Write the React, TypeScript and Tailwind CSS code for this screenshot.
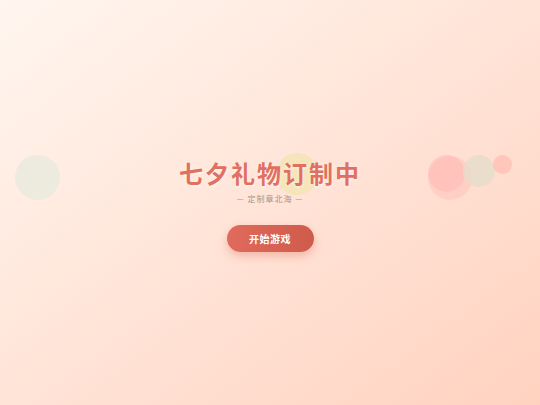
import React from "react";

// floating decorative bubbles
function Bubble({ className }: { className: string }) {
  return <div className={`absolute rounded-full ${className}`} />;
}

export default function App() {
  return (
    <div
      className="relative h-[405px] w-[540px] overflow-hidden bg-gradient-to-br from-[#fff6ef] to-[#ffd2c0]"
      style={{ fontFamily: '"Noto Sans CJK SC", "Noto Sans", sans-serif' }}
    >
      {/* ─── Bubbles ─── */}
      <Bubble className="left-[15px] top-[155px] h-[45px] w-[45px] bg-[#e9eadd]/80" />
      <Bubble className="left-[276px] top-[153px] h-[42px] w-[42px] bg-[#f5e3b8]/90" />
      <Bubble className="left-[428px] top-[156px] h-[44px] w-[44px] bg-[#ffb9b4]/40" />
      <Bubble className="left-[428px] top-[155px] h-[37px] w-[37px] bg-[#ffb5b2]/50" />
      <Bubble className="left-[463px] top-[155px] h-[32px] w-[32px] bg-[#e6dccb]/80" />
      <Bubble className="left-[493px] top-[155px] h-[19px] w-[19px] bg-[#ffbcb4]/70" />

      {/* ─── Title + CTA ─── */}
      <div className="relative flex h-full flex-col items-center pt-[157px]">
        <h1 className="text-[24px] font-bold leading-[32px] tracking-[2px] text-[#e0705f] [text-shadow:0_1px_3px_rgba(255,255,255,0.8)]">
          七夕礼物订制中
        </h1>
        <p className="mt-[4px] text-[8px] leading-[12px] tracking-[1px] text-[#a8958a]">
          — 定制章北海 —
        </p>
        <button className="mt-[20px] flex h-[27px] w-[87px] items-center justify-center rounded-full bg-gradient-to-r from-[#e06a5b] to-[#cf5b4d] text-[10px] font-bold tracking-[0.5px] text-white shadow-[0_4px_10px_rgba(214,96,80,0.35)]">
          开始游戏
        </button>
      </div>
    </div>
  );
}
